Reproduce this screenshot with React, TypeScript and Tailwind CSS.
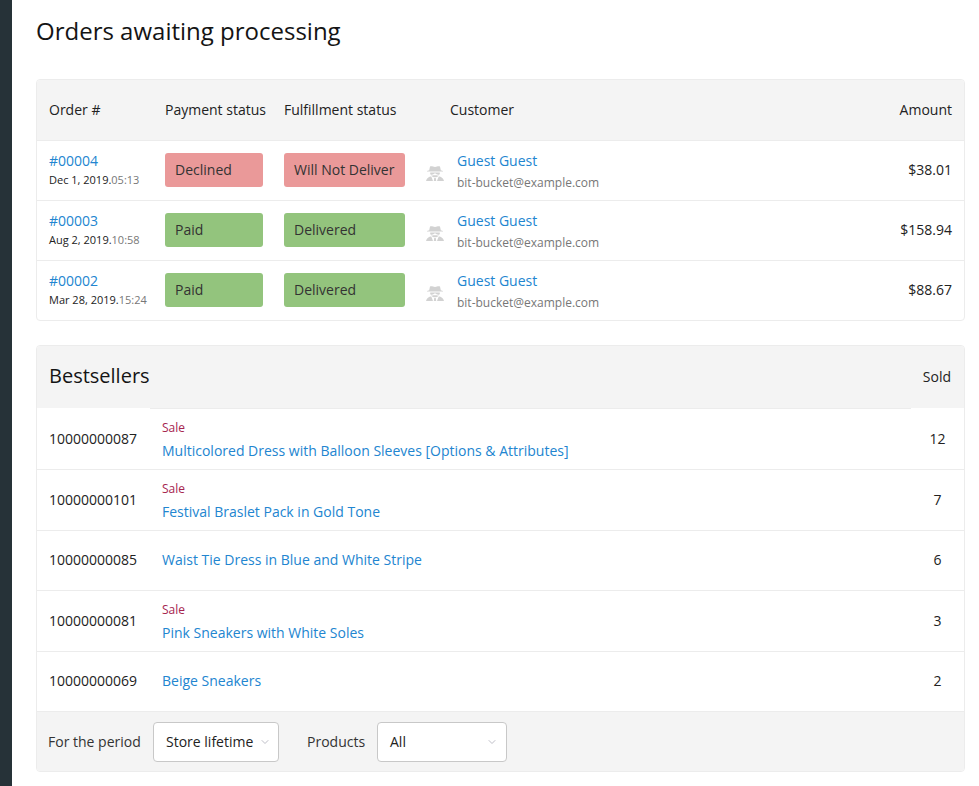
import React from 'react';
import { ChevronDown } from 'lucide-react';

const orders = [
  { id: '#00004', date: 'Dec 1, 2019.', time: '05:13', pay: 'Declined', ful: 'Will Not Deliver', amount: '$38.01', bad: true },
  { id: '#00003', date: 'Aug 2, 2019.', time: '10:58', pay: 'Paid', ful: 'Delivered', amount: '$158.94', bad: false },
  { id: '#00002', date: 'Mar 28, 2019.', time: '15:24', pay: 'Paid', ful: 'Delivered', amount: '$88.67', bad: false },
];

const products = [
  { sku: '10000000087', name: 'Multicolored Dress with Balloon Sleeves [Options & Attributes]', sold: 12, sale: true, h: 'h-[60px]', line: '' },
  { sku: '10000000101', name: 'Festival Braslet Pack in Gold Tone', sold: 7, sale: true, h: 'h-[61px]', line: 'border-t border-[#ececec]' },
  { sku: '10000000085', name: 'Waist Tie Dress in Blue and White Stripe', sold: 6, sale: false, h: 'h-[60px]', line: 'border-t border-[#ececec]' },
  { sku: '10000000081', name: 'Pink Sneakers with White Soles', sold: 3, sale: true, h: 'h-[61px]', line: 'border-t border-[#ececec]' },
  { sku: '10000000069', name: 'Beige Sneakers', sold: 2, sale: false, h: 'h-[60px]', line: 'border-t border-[#ececec]' },
];

// hat, glasses and shoulders, the anonymous guest avatar
function GuestIcon() {
  return (
    <svg viewBox="0 0 18 15" className="w-[18px] h-[15px] text-[#d2d2d2]" fill="currentColor">
      <path d="M4 0.6 C5 0 6 .3 7 .6 C8.2 1 9.8 1 11 .6 C12 .3 13 0 14 .6 L14.8 4.2 L17 5 L17 5.6 L1 5.6 L1 5 L3.2 4.2 Z" />
      <path d="M4.2 6.4 H13.8 V8 C13.8 8.4 13.2 8.8 12.2 8.8 C11 8.8 10.2 8.3 9.9 7.6 H8.1 C7.8 8.3 7 8.8 5.8 8.8 C4.8 8.8 4.2 8.4 4.2 8 Z" />
      <path d="M5.2 9.4 C6 9.7 6.8 9.7 7.4 9.2 H10.6 C11.2 9.7 12 9.7 12.8 9.4 C12.2 10.6 10.8 11.2 9 11.2 C7.2 11.2 5.8 10.6 5.2 9.4 Z" />
      <path d="M4.2 10.6 L5.4 10.8 L7 15 L0 15 C.5 13 2 11.2 4.2 10.6 Z" />
      <path d="M13.8 10.6 L12.6 10.8 L11 15 L18 15 C17.5 13 16 11.2 13.8 10.6 Z" />
      <path d="M8.2 12 H9.8 L10.2 15 H7.8 Z" />
    </svg>
  );
}

function Badge({ text, bad, width }: { text: string; bad: boolean; width: string }) {
  return (
    <div className={`${width} h-[34px] rounded-[3px] pl-[10px] pb-[2px] flex items-center text-[14px] text-[#333] ${bad ? 'bg-[#ea9999]' : 'bg-[#93c47d]'}`}>
      {text}
    </div>
  );
}

function Select({ value, width, gap }: { value: string; width: string; gap: string }) {
  return (
    <div className={`${width} h-[40px] bg-white border border-[#c8c8c8] rounded-[4px] pl-[12px] flex items-center text-[14px] text-[#222]`}>
      <span className={gap}>{value}</span>
      <ChevronDown className="w-[12px] h-[12px] text-[#a8a8b4]" strokeWidth={1.5} />
    </div>
  );
}

export default function App() {
  return (
    <div className="flex h-[786px] overflow-hidden bg-white font-['Open_Sans',sans-serif] text-[#222]">
      <div className="w-[12px] shrink-0 bg-[#263238]" />
      <main className="w-[953px] ml-[24px] shrink-0 -mr-[24px] pt-[14px]">
        <h1 className="text-[24px] leading-[33px] text-[#141414]">Orders awaiting processing</h1>

        <section className="mt-[32px] w-[929px] border border-[#ececec] rounded-[4px] overflow-hidden">
          <div className="h-[61px] bg-[#f4f4f4] border-b border-[#ececec] pl-[12px] pr-[12px] pb-[2px] flex items-center text-[14px] text-[#222]">
            <span className="w-[116px]">Order #</span>
            <span className="w-[119px]">Payment status</span>
            <span className="w-[166px]">Fulfillment status</span>
            <span>Customer</span>
            <span className="ml-auto">Amount</span>
          </div>
          {orders.map((o, i) => (
            <div key={o.id} className={`pl-[12px] pr-[12px] pb-[1px] flex items-center ${i < 2 ? 'h-[60px] border-b border-[#ececec]' : 'h-[59px]'}`}>
              <div className="w-[116px]">
                <div className="text-[14px] leading-[19px] text-[#2285d0]">{o.id}</div>
                <div className="mt-[1px] text-[11px] leading-[18px] text-[#222] whitespace-nowrap">
                  {o.date}<span className="text-[#777]">{o.time}</span>
                </div>
              </div>
              <div className="w-[119px]"><Badge text={o.pay} bad={o.bad} width="w-[98px]" /></div>
              <div className="w-[141px]"><Badge text={o.ful} bad={o.bad} width="w-[121px]" /></div>
              <div className="w-[32px] pl-[1px] pt-[6px]"><GuestIcon /></div>
              <div className="pt-[2px]">
                <div className="text-[14px] leading-[19px] text-[#2285d0]">Guest Guest</div>
                <div className="mt-[4px] text-[12px] leading-[18px] text-[#777]">bit-bucket@example.com</div>
              </div>
              <div className="ml-auto mb-[2px] text-[14px] text-[#222]">{o.amount}</div>
            </div>
          ))}
        </section>

        <section className="mt-[24px] w-[929px] border border-[#ececec] rounded-[4px] overflow-hidden">
          <div className="h-[62px] bg-[#f4f4f4] pl-[12px] pr-[13px] flex items-center">
            <h2 className="mb-[2px] text-[20px] text-[#141414]">Bestsellers</h2>
            <span className="ml-auto mb-[2px] text-[14px] text-[#222]">Sold</span>
          </div>
          <div className="h-[1px] pl-[113px] pr-[53px]">
            <div className="h-[1px] bg-[#ececec]" />
          </div>
          {products.map((p) => (
            <div key={p.sku} className={`${p.h} ${p.line} pl-[12px] flex items-center`}>
              <div className="mb-[2px] w-[113px] text-[14px] text-[#222]">{p.sku}</div>
              <div className="flex-1">
                {p.sale && <div className="pt-[1px] mb-[5px] text-[12px] leading-[16px] text-[#a6244f]">Sale</div>}
                <div className={`text-[14px] leading-[19px] text-[#2285d0] ${p.sale ? '' : 'mb-[2px]'}`}>{p.name}</div>
              </div>
              <div className="mb-[2px] w-[31px] mr-[11px] text-center text-[14px] text-[#222]">{p.sold}</div>
            </div>
          ))}
          <div className="h-[60px] bg-[#f4f4f4] border-t border-[#ececec] pl-[11px] flex items-center text-[14px] text-[#333]">
            <span className="w-[105px]">For the period</span>
            <Select value="Store lifetime" width="w-[126px]" gap="mr-[6px]" />
            <span className="ml-[28px] w-[70px]">Products</span>
            <Select value="All" width="w-[130px]" gap="mr-[80px]" />
          </div>
        </section>
      </main>
    </div>
  );
}
